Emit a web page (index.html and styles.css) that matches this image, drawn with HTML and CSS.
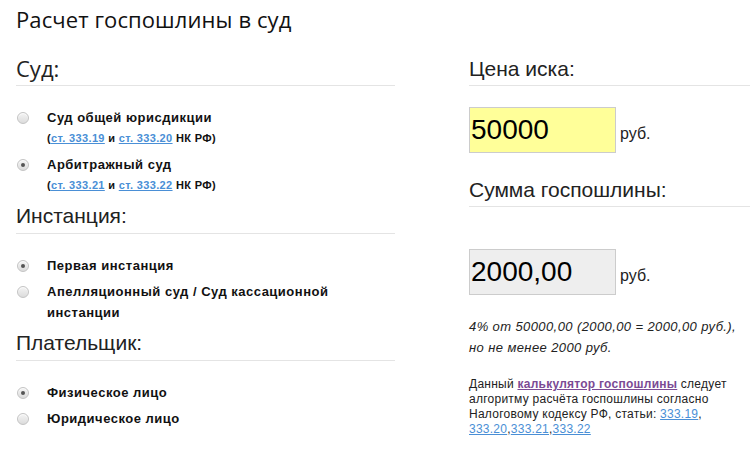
FILE: index.html
```html
<!DOCTYPE html>
<html lang="ru">
<head>
<meta charset="utf-8">
<title>Расчет госпошлины в суд</title>
<link rel="stylesheet" href="styles.css">
</head>
<body>
<div class="page">
  <h1 class="title">Расчет госпошлины в суд</h1>
  <div class="columns">
    <div class="left">
      <h2 class="head head-os">Суд:</h2>
      <div class="group">
        <div class="opt">
          <span class="radio"></span>
          <div class="opt-text">
            <div class="opt-main">Суд общей юрисдикции</div>
            <div class="opt-sub">(<a href="#">ст. 333.19</a> и <a href="#">ст. 333.20</a> НК РФ)</div>
          </div>
        </div>
        <div class="opt">
          <span class="radio on"></span>
          <div class="opt-text">
            <div class="opt-main">Арбитражный суд</div>
            <div class="opt-sub">(<a href="#">ст. 333.21</a> и <a href="#">ст. 333.22</a> НК РФ)</div>
          </div>
        </div>
      </div>
      <h2 class="head">Инстанция:</h2>
      <div class="group">
        <div class="opt">
          <span class="radio on"></span>
          <div class="opt-text"><div class="opt-main">Первая инстанция</div></div>
        </div>
        <div class="opt">
          <span class="radio"></span>
          <div class="opt-text"><div class="opt-main">Апелляционный суд / Суд кассационной инстанции</div></div>
        </div>
      </div>
      <h2 class="head">Плательщик:</h2>
      <div class="group">
        <div class="opt">
          <span class="radio on"></span>
          <div class="opt-text"><div class="opt-main">Физическое лицо</div></div>
        </div>
        <div class="opt">
          <span class="radio"></span>
          <div class="opt-text"><div class="opt-main">Юридическое лицо</div></div>
        </div>
      </div>
    </div>
    <div class="right">
      <h2 class="rhead">Цена иска:</h2>
      <div class="field-row">
        <div class="field field-input">50000</div>
        <span class="unit">руб.</span>
      </div>
      <h2 class="rhead rhead-2">Сумма госпошлины:</h2>
      <div class="field-row field-row-2">
        <div class="field field-result">2000,00</div>
        <span class="unit">руб.</span>
      </div>
      <p class="formula">4% от 50000,00 (2000,00 = 2000,00 руб.), но не менее 2000 руб.</p>
      <p class="note">Данный <a class="strong-link" href="#">калькулятор госпошлины</a> следует алгоритму расчёта госпошлины согласно Налоговому кодексу РФ, статьи: <a href="#">333.19</a>, <a href="#">333.20</a>,<a href="#">333.21</a>,<a href="#">333.22</a></p>
    </div>
  </div>
</div>
</body>
</html>
```

FILE: styles.css
```css
html, body {
  margin: 0;
  padding: 0;
  background: #ffffff;
}

body {
  font-family: "Liberation Sans", Arial, sans-serif;
  color: #222222;
  overflow: hidden;
}

.page {
  padding: 6px 0 0 16px;
}

.title {
  margin: 0;
  font-family: "Open Sans", sans-serif;
  font-weight: 400;
  font-size: 22px;
  line-height: 26px;
  letter-spacing: 0.1px;
  color: #111111;
}

.columns {
  display: flex;
  align-items: flex-start;
}

.left {
  width: 379px;
  flex: none;
}

.right {
  width: 281px;
  flex: none;
  margin-left: 74px;
}

.head {
  margin: 2px 0 21px 0;
  padding-bottom: 4px;
  border-bottom: 1px solid #e4e4e4;
  font-family: "Liberation Sans", Arial, sans-serif;
  font-weight: 400;
  font-size: 21px;
  line-height: 26px;
  color: #222222;
}

.head-os {
  margin-top: 23px;
  font-family: "Open Sans", sans-serif;
  font-size: 22px;
}

.group {
  display: flex;
  flex-direction: column;
}

.opt {
  display: flex;
  align-items: flex-start;
  margin-bottom: 5px;
}

.radio {
  flex: none;
  width: 10px;
  height: 10px;
  margin: 5px 18px 0 1px;
  border-radius: 50%;
  border: 1px solid #c4c4c4;
  background: linear-gradient(#f4f4f4, #dcdcdc);
  box-shadow: inset 0 1px 1px rgba(255,255,255,0.8);
  position: relative;
}

.radio.on::after {
  content: "";
  position: absolute;
  left: 3px;
  top: 3px;
  width: 4px;
  height: 4px;
  border-radius: 50%;
  background: #555555;
}

.opt-text {
  flex: 1;
}

.opt-main {
  font-size: 13px;
  font-weight: 700;
  line-height: 21px;
  letter-spacing: 0.5px;
  color: #111111;
}

.opt-sub {
  font-size: 11px;
  font-weight: 700;
  line-height: 21px;
  letter-spacing: 0.35px;
  color: #111111;
}

a {
  color: #4a8fd6;
  text-decoration: underline;
}

.rhead {
  margin: 25px 0 21px 0;
  padding-bottom: 4px;
  border-bottom: 1px solid #e4e4e4;
  font-weight: 400;
  font-size: 21px;
  line-height: 24px;
  color: #222222;
}

.rhead-2 {
  margin-top: 25px;
  margin-bottom: 0;
}

.field-row {
  display: flex;
  align-items: flex-end;
}

.field-row-2 {
  margin-top: 42px;
}

.field {
  box-sizing: border-box;
  width: 147px;
  height: 46px;
  border: 1px solid #cccccc;
  padding: 0 0 0 1px;
  font-size: 28px;
  line-height: 44px;
  color: #000000;
}

.field-input {
  background: #ffff99;
}

.field-result {
  background: #eeeeee;
}

.unit {
  margin-left: 4px;
  margin-bottom: 10px;
  font-size: 16px;
  line-height: 18px;
  color: #222222;
}

.formula {
  margin: 21px 0 0 0;
  padding-right: 8px;
  font-size: 13px;
  font-style: italic;
  line-height: 21px;
  letter-spacing: 0.4px;
  color: #222222;
}

.note {
  margin: 19px 0 0 0;
  padding-right: 8px;
  font-size: 12px;
  line-height: 15px;
  letter-spacing: 0.25px;
  color: #222222;
}

.strong-link {
  font-weight: 700;
  color: #7b4a94;
}
```
